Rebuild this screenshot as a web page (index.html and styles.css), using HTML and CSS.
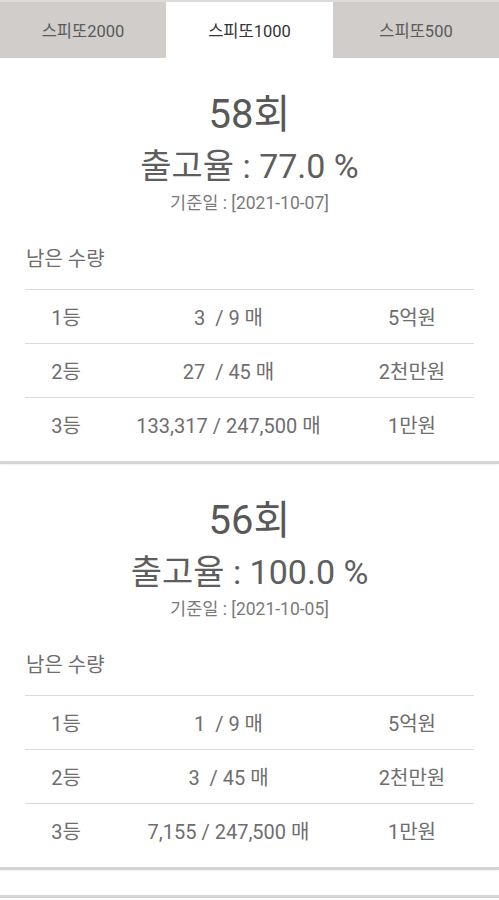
FILE: index.html
```html
<!DOCTYPE html>
<html lang="ko">
<head>
<meta charset="utf-8">
<link rel="stylesheet" href="styles.css">
</head>
<body>
<nav class="tabs">
  <div class="tab">스피또2000</div>
  <div class="tab active">스피또1000</div>
  <div class="tab">스피또500</div>
</nav>
<main>
  <section class="card">
    <h1 class="round">58회</h1>
    <div class="rate">출고율 : 77.0 %</div>
    <div class="date">기준일 : [2021-10-07]</div>
    <div class="label">남은 수량</div>
    <div class="table">
      <div class="row"><span class="rank">1등</span><span class="count">3&nbsp; / 9 매</span><span class="prize">5억원</span></div>
      <div class="row"><span class="rank">2등</span><span class="count">27&nbsp; / 45 매</span><span class="prize">2천만원</span></div>
      <div class="row"><span class="rank">3등</span><span class="count">133,317 / 247,500 매</span><span class="prize">1만원</span></div>
    </div>
  </section>
  <section class="card">
    <h1 class="round">56회</h1>
    <div class="rate">출고율 : 100.0 %</div>
    <div class="date">기준일 : [2021-10-05]</div>
    <div class="label">남은 수량</div>
    <div class="table">
      <div class="row"><span class="rank">1등</span><span class="count">1&nbsp; / 9 매</span><span class="prize">5억원</span></div>
      <div class="row"><span class="rank">2등</span><span class="count">3&nbsp; / 45 매</span><span class="prize">2천만원</span></div>
      <div class="row"><span class="rank">3등</span><span class="count">7,155 / 247,500 매</span><span class="prize">1만원</span></div>
    </div>
  </section>
  <section class="card next"></section>
</main>
</body>
</html>
```

FILE: styles.css
```css
html, body {
  margin: 0;
  padding: 0;
  background: #ffffff;
}
body {
  font-family: Roboto, "Noto Sans CJK KR", sans-serif;
  color: #555;
  width: 499px;
  height: 900px;
  overflow: hidden;
}
.tabs {
  display: grid;
  grid-template-columns: 166px 167px 166px;
  height: 58px;
  border-top: 2px solid #dcdcdc;
  box-sizing: border-box;
}
.tab {
  background: #d0cdcb;
  display: flex;
  align-items: center;
  justify-content: center;
  font-size: 16.5px;
  color: #5a5a5a;
}
.tab.active {
  background: #ffffff;
  color: #333;
}
.card {
  padding: 34px 0 10px;
  border-bottom: 3px solid #d4d4d4;
  box-shadow: 0 1px 2px rgba(0,0,0,0.06);
  display: flex;
  flex-direction: column;
  align-items: stretch;
}
.round {
  margin: 0;
  font-weight: 400;
  font-size: 40px;
  line-height: 46px;
  text-align: center;
  color: #585858;
}
.rate {
  margin-top: 10px;
  font-size: 34px;
  line-height: 36px;
  text-align: center;
  color: #5e5e5e;
}
.date {
  margin-top: 9px;
  font-size: 17.5px;
  line-height: 20px;
  text-align: center;
  color: #7a7a7a;
}
.label {
  margin-top: 35px;
  padding-left: 26px;
  font-size: 20px;
  line-height: 22px;
  color: #6e6e6e;
}
.table {
  margin: 19px 25px 0 25px;
}
.row {
  display: grid;
  grid-template-columns: 82px 1fr 124px;
  align-items: center;
  height: 54px;
  border-top: 1px solid #dadada;
  box-sizing: border-box;
  font-size: 20px;
  color: #6e6e6e;
}
.rank {
  text-align: center;
}
.count {
  text-align: center;
}
.prize {
  text-align: center;
}
.card.next {
  margin-top: 25px;
  border-bottom: none;
  border-top: 3px solid #d4d4d4;
  padding: 0;
  height: 40px;
  box-shadow: none;
}
```
